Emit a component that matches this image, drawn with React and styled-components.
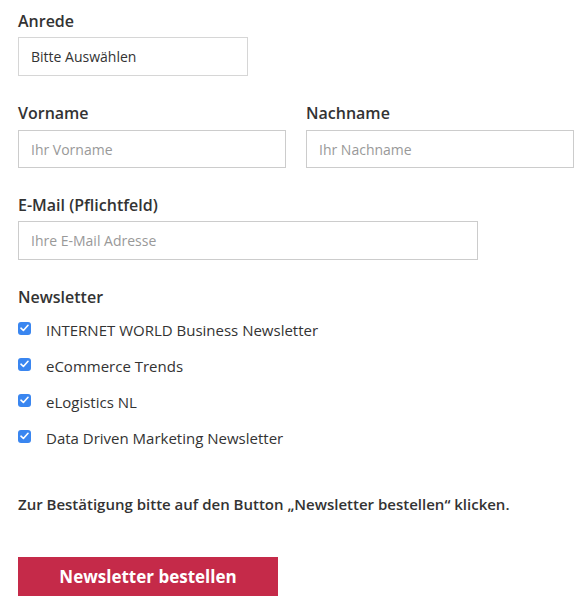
import React from "react";
import styled, { createGlobalStyle } from "styled-components";

const Global = createGlobalStyle`
  html, body { margin: 0; padding: 0; background: #fff; }
  body { font-family: "Open Sans", "Noto Sans", sans-serif; color: #333; }
  * { box-sizing: border-box; }
`;

const Form = styled.form`
  padding: 10px 15px 0 18px;
  display: flex;
  flex-direction: column;
`;

const Field = styled.div`
  display: flex;
  flex-direction: column;
  margin-bottom: ${(p) => p.$mb ?? 26}px;
  width: ${(p) => p.$w ? `${p.$w}px` : "auto"};
`;

const Row = styled.div`
  display: grid;
  grid-template-columns: 268px 268px;
  column-gap: 20px;
`;

const Label = styled.label`
  font-size: 16px;
  font-weight: 600;
  line-height: 22px;
  color: #333;
  margin-bottom: ${(p) => p.$mb ?? 5}px;
`;

const Select = styled.div`
  height: 39px;
  border: 1px solid #d6d6d6;
  padding: 0 12px;
  display: flex;
  align-items: center;
  font-size: 14px;
  color: #333;
  background: #fff;
`;

const Input = styled.input`
  height: ${(p) => p.$h ?? 39}px;
  border: 1px solid #ccc;
  padding: 0 12px;
  font-family: inherit;
  font-size: 14px;
  color: #333;
  width: 100%;
  outline: none;
  &::placeholder { color: #999; }
`;

const CheckList = styled.div`
  display: flex;
  flex-direction: column;
`;

const CheckRow = styled.label`
  height: 36px;
  display: flex;
  align-items: center;
  font-size: 15px;
  color: #333;
`;

const Box = styled.span`
  width: 13px;
  height: 13px;
  border-radius: 3px;
  background: #3a86f0;
  display: inline-flex;
  align-items: center;
  justify-content: center;
  margin-right: 15px;
  margin-top: -4px;
`;

const Note = styled.p`
  margin: 38px 0 0;
  font-size: 15px;
  font-weight: 600;
  line-height: 20px;
  color: #333;
`;

const Button = styled.button`
  margin-top: 43px;
  width: 260px;
  height: 39px;
  border: none;
  background: #c52a49;
  color: #fff;
  font-family: inherit;
  font-size: 17px;
  font-weight: 700;
  cursor: pointer;
`;

const Check = () => (
  <Box>
    <svg width="9" height="8" viewBox="0 0 9 8">
      <path d="M1 4.2 L3.4 6.5 L8 1.3" stroke="#fff" strokeWidth="1.6" fill="none" strokeLinecap="round" strokeLinejoin="round" />
    </svg>
  </Box>
);

const newsletters = [
  "INTERNET WORLD Business Newsletter",
  "eCommerce Trends",
  "eLogistics NL",
  "Data Driven Marketing Newsletter",
];

export default function App() {
  return (
    <>
      <Global />
      <Form onSubmit={(e) => e.preventDefault()}>
        <Field $w={230}>
          <Label>Anrede</Label>
          <Select>Bitte Auswählen</Select>
        </Field>
        <Row>
          <Field>
            <Label $mb={6}>Vorname</Label>
            <Input $h={38} placeholder="Ihr Vorname" />
          </Field>
          <Field>
            <Label $mb={6}>Nachname</Label>
            <Input $h={38} placeholder="Ihr Nachname" />
          </Field>
        </Row>
        <Field $w={460}>
          <Label>E-Mail (Pflichtfeld)</Label>
          <Input placeholder="Ihre E-Mail Adresse" />
        </Field>
        <Field $mb={0}>
          <Label $mb={4}>Newsletter</Label>
          <CheckList>
            {newsletters.map((n) => (
              <CheckRow key={n}>
                <Check />
                {n}
              </CheckRow>
            ))}
          </CheckList>
        </Field>
        <Note>Zur Bestätigung bitte auf den Button „Newsletter bestellen“ klicken.</Note>
        <Button type="submit">Newsletter bestellen</Button>
      </Form>
    </>
  );
}
